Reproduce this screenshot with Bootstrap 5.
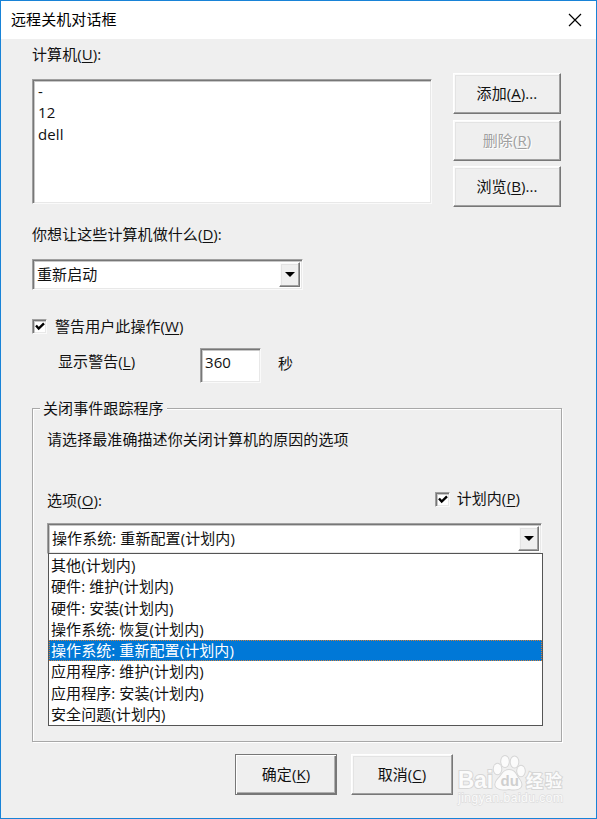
<!DOCTYPE html>
<html lang="zh-CN">
<head>
<meta charset="utf-8">
<title>远程关机对话框</title>
<link href="https://cdn.jsdelivr.net/npm/bootstrap@5.3.0/dist/css/bootstrap.min.css" rel="stylesheet">
<style>
body{font:15px/20px "Open Sans","Noto Sans CJK SC",sans-serif;color:#111;background:#efefef;letter-spacing:.08px}
.dialog{width:597px;height:819px;border:1px solid #1883d7;background:#efefef}
.titlebar{height:38px;padding:0 14px 2px 10px;color:#000}
.titlebar svg{margin-top:1px}
.dialog-content{padding:5px 34px 0 31px}
u{text-underline-offset:2px;text-decoration-thickness:1px;text-decoration-skip-ink:none}
.sunken{background:#fff;border:1px solid;border-color:#a0a0a0 #fafafa #fafafa #a0a0a0;box-shadow:inset 1px 1px #777,inset 2px 2px #c8c8c8,inset -1px -1px #e8e8e8}
.raised{background:#efefef;color:#111;border:1px solid;border-color:#fff #777 #777 #fff;border-radius:0;box-shadow:inset -1px -1px #a0a0a0,inset 1px 1px #fafafa,inset 2px 2px #e3e3e3;font:inherit;letter-spacing:inherit;padding:0 0 2px;height:41px}
.raised:disabled{opacity:1;color:#a0a0a0;background:#efefef;border-color:#fff #777 #777 #fff;text-shadow:1px 1px #fff}
.side-buttons{width:108px;margin:29px 1px 0 0}
.gap-remove{margin-top:6px}
.gap-browse{margin-top:5px}
.computers{width:400px;height:125px;margin-top:15px;padding:1px 5px 0 5px;line-height:21.3px}
.action-label{margin-top:17px}
.combo{height:31px;padding:2px 2px 2px 4px}
.combo>:first-child{margin-top:-2px}
.combo .raised{width:21px;height:25px;padding:0}
.action-combo{width:271px;margin-top:15px}
.reason-combo{width:495px;margin-top:13px}
.tick{width:15px;height:15px}
.warn-row{margin-top:26px}
.time-row{margin-top:12px}
.time-label{width:142px;margin:-9px 0 0 26px}
.seconds{width:61px;height:35px;padding:3px 4px}
.tracker{margin-top:25px;border:1px solid #a8a8a8;box-shadow:1px 1px #fff,inset 1px 1px #fff;height:334px;width:530px;padding:0 0 0 14px}
.tracker-title{background:#efefef;margin:-11px 0 0 -7px;padding:0 3px}
.option-row{margin-top:41px}
.planned{margin:-2px 41px 0 0}
.choices{width:495px;margin:-1px 0 0 1px;border:1px solid #555;background:#fff;padding:1px 0 0}
.choices li{height:21.3px;line-height:21.3px;padding-left:2px}
.choices .chosen{background:#0078d7;color:#fff;outline:1px dotted #d0803c;outline-offset:-1px}
.commands{margin:12px 0 0 203px}
.commands .raised{width:102px}
.commands .main-command{border-color:#777;box-shadow:inset 1px 1px #fff,inset -1px -1px #777,inset -2px -2px #b0b0b0}
.watermark{margin-left:2px}
</style>
<script src="https://cdn.jsdelivr.net/npm/bootstrap@5.3.0/dist/js/bootstrap.bundle.min.js"></script>
</head>
<body>
<div class="dialog overflow-hidden">
  <header class="titlebar d-flex justify-content-between align-items-center bg-white">
    <span>远程关机对话框</span>
    <svg width="14" height="14" viewBox="0 0 14 14" stroke="#000" stroke-width="1.2"><path d="M1 1l12 12M13 1L1 13"/></svg>
  </header>
  <main class="dialog-content">
    <div class="d-flex">
      <div>
        <div>计算机(<u>U</u>):</div>
        <div class="computers sunken"><div>-</div><div>12</div><div>dell</div></div>
      </div>
      <div class="side-buttons d-flex flex-column ms-auto">
        <button class="btn raised">添加(<u>A</u>)...</button>
        <button class="btn raised gap-remove" disabled>删除(<u>R</u>)</button>
        <button class="btn raised gap-browse">浏览(<u>B</u>)...</button>
      </div>
    </div>
    <div class="action-label">你想让这些计算机做什么(<u>D</u>):</div>
    <div class="combo action-combo sunken d-flex align-items-center justify-content-between">
      <span>重新启动</span>
      <span class="raised d-flex align-items-center justify-content-center"><svg width="10" height="5"><path d="M0 0h10L5 5z"/></svg></span>
    </div>
    <div class="warn-row d-flex align-items-center">
      <span class="tick sunken d-flex"><svg width="13" height="13" viewBox="0 0 13 13" fill="none" stroke="#000" stroke-width="2.4"><path d="M3 5.500l2.700 3L11 3.300"/></svg></span>
      <span class="ms-2">警告用户此操作(<u>W</u>)</span>
    </div>
    <div class="time-row d-flex align-items-center">
      <span class="time-label">显示警告(<u>L</u>)</span>
      <span class="seconds sunken">360</span>
      <span style="margin:-5px 0 0 17px">秒</span>
    </div>
    <div class="tracker">
      <div class="tracker-title d-table">关闭事件跟踪程序</div>
      <div style="margin-top:11px">请选择最准确描述你关闭计算机的原因的选项</div>
      <div class="option-row d-flex align-items-center">
        <span>选项(<u>O</u>):</span>
        <span class="planned d-flex align-items-center ms-auto">
          <span class="tick sunken d-flex"><svg width="13" height="13" viewBox="0 0 13 13" fill="none" stroke="#000" stroke-width="2.4"><path d="M3 5.500l2.700 3L11 3.300"/></svg></span>
          <span style="margin:-2px 0 0 7px">计划内(<u>P</u>)</span>
        </span>
      </div>
      <div class="combo reason-combo sunken d-flex align-items-center justify-content-between">
        <span>操作系统: 重新配置(计划内)</span>
        <span class="raised d-flex align-items-center justify-content-center"><svg width="10" height="5"><path d="M0 0h10L5 5z"/></svg></span>
      </div>
      <ul class="choices list-unstyled">
        <li>其他(计划内)</li>
        <li>硬件: 维护(计划内)</li>
        <li>硬件: 安装(计划内)</li>
        <li>操作系统: 恢复(计划内)</li>
        <li class="chosen">操作系统: 重新配置(计划内)</li>
        <li>应用程序: 维护(计划内)</li>
        <li>应用程序: 安装(计划内)</li>
        <li>安全问题(计划内)</li>
      </ul>
    </div>
    <div class="commands d-flex">
      <button class="btn raised main-command flex-shrink-0">确定(<u>K</u>)</button>
      <button class="btn raised flex-shrink-0" style="margin-left:14px">取消(<u>C</u>)</button>
      <svg class="watermark flex-shrink-0" width="112" height="54" viewBox="0 0 112 54" fill="#fbfbfb" stroke="#d6d6d6" stroke-width="2" paint-order="stroke" font-family="Liberation Sans,Noto Sans CJK SC,sans-serif" letter-spacing="0">
        <text x="3" y="34" font-size="23" font-weight="700" textLength="35" lengthAdjust="spacingAndGlyphs">Bai</text>
        <ellipse cx="42.500" cy="15" rx="3.800" ry="5.200"/><ellipse cx="50" cy="7.500" rx="3.800" ry="5.500"/><ellipse cx="59.500" cy="8" rx="3.800" ry="5.500"/><ellipse cx="66" cy="17" rx="3.800" ry="5.200"/>
        <path d="M54 16c6 0 7 5 10 9 6 8 0 12-10 10-10 2-18-2-11-10 4-4 5-9 11-9z"/>
        <text x="45.500" y="32" font-size="15" font-weight="700" fill="#cfcfcf" stroke="none">du</text>
        <text x="71" y="33" font-size="17" font-weight="700" textLength="36">经验</text>
        <text x="3" y="48" font-size="12" stroke="#dedede" stroke-width="1.300" textLength="105">jingyan.baidu.com</text>
      </svg>
    </div>
  </main>
</div>
</body>
</html>
